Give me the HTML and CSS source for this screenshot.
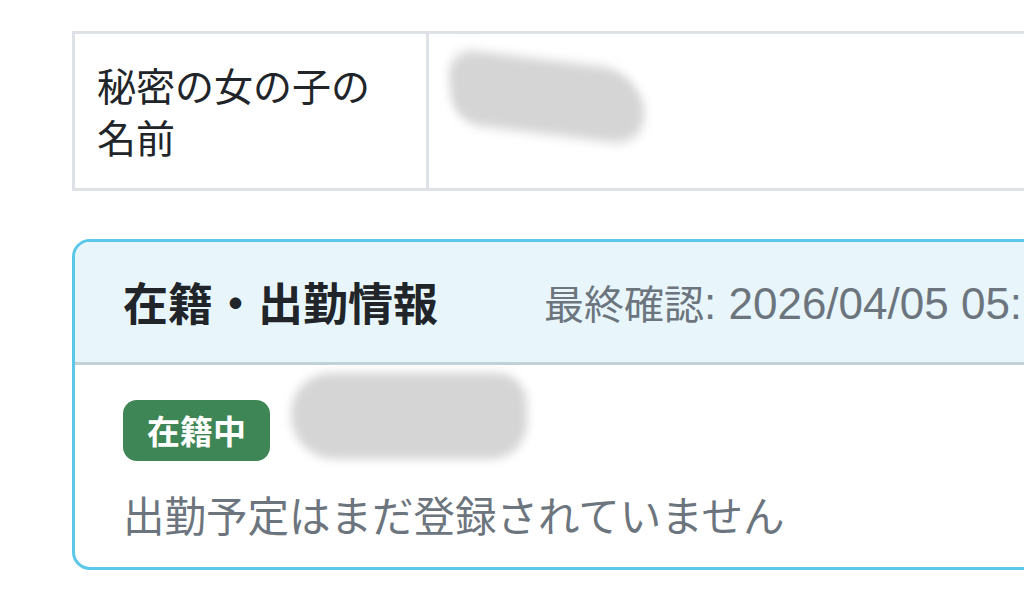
FILE: index.html
```html
<!DOCTYPE html>
<html lang="ja">
  <head>
    <meta charset="UTF-8">
    <title>在籍・出勤情報</title>
    <link rel="stylesheet" href="styles.css">
  </head>
  <body>
    <main class="wrap">
      <table class="profile">
        <tr>
          <th class="label">秘密の女の子の名前</th>
          <td class="value"><span class="redact redact-name"></span></td>
        </tr>
      </table>

      <section class="card">
        <div class="card-header">
          <h2 class="card-title">在籍・出勤情報</h2>
          <div class="checked"><span class="checked-label">最終確認</span>: 2026/04/05 05:12</div>
        </div>
        <div class="card-body">
          <div class="status-row">
            <span class="badge">在籍中</span>
            <span class="redact redact-shop"></span>
          </div>
          <p class="note">出勤予定はまだ登録されていません</p>
        </div>
      </section>
    </main>
  </body>
</html>
```

FILE: styles.css
```css
*{
  box-sizing: border-box;
}
html, body{
  margin: 0;
  padding: 0;
  overflow: hidden;
  background: #fff;
}
body{
  font-family: "Noto Sans CJK JP", sans-serif;
  color: #212529;
}
.wrap{
  width: 1400px;
  padding: 31px 0 0 72px;
}

/* profile table */
.profile{
  width: 1300px;
  border-collapse: collapse;
  border: 3px solid #dee2e6;
  table-layout: fixed;
}
.profile th,
.profile td{
  border: 3px solid #dee2e6;
  padding: 24px 22px 26px;
  text-align: left;
  vertical-align: top;
  font-size: 39px;
  font-weight: 400;
  line-height: 52px;
}
.profile .label{
  width: 354px;
}
.redact{
  display: inline-block;
  background: #d5d5d5;
  filter: blur(5px);
}
.redact-name{
  width: 196px;
  height: 74px;
  margin-top: 2px;
  margin-left: -2px;
  border-radius: 34px 44px 40px 30px;
  transform: rotate(7deg) skewX(12deg);
}

/* card */
.card{
  width: 1300px;
  margin-top: 48px;
  border: 3px solid #5bc8ea;
  border-radius: 18px;
  overflow: hidden;
}
.card-header{
  display: flex;
  align-items: center;
  gap: 106px;
  height: 123px;
  padding: 0 48px;
  background: #e8f6fc;
  border-bottom: 3px solid #c2d1d6;
}
.card-title{
  margin: 0;
  font-size: 45px;
  font-weight: 700;
  line-height: 1.2;
  color: #212529;
}
.checked{
  font-family: "Liberation Sans", "Noto Sans CJK JP", sans-serif;
  font-size: 44px;
  color: #6c757d;
  white-space: nowrap;
}
.checked-label{
  font-family: "Noto Sans CJK JP", sans-serif;
  font-size: 40px;
}

.card-body{
  padding: 8px 48px 24px;
}
.status-row{
  display: flex;
  align-items: flex-end;
  gap: 21px;
}
.badge{
  display: inline-block;
  padding: 0 24px;
  height: 61px;
  line-height: 61px;
  border-radius: 14px;
  background: #3f8656;
  color: #fff;
  font-size: 33px;
  font-weight: 700;
}
.redact-shop{
  width: 236px;
  height: 86px;
  margin-bottom: 2px;
  border-radius: 40px 30px 36px 44px;
}
.note{
  margin: 24px 0 0;
  font-size: 41.5px;
  line-height: 58px;
  color: #6c757d;
}
```
